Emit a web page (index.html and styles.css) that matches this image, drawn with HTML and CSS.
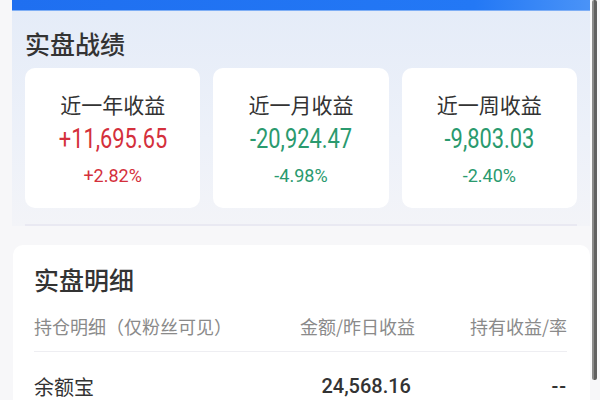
FILE: index.html
```html
<!DOCTYPE html>
<html lang="zh">
<head>
<meta charset="utf-8">
<link rel="stylesheet" href="styles.css">
</head>
<body>
<div class="page">
  <div class="main">
    <div class="hero"></div>
    <section class="perf">
      <h2 class="title">实盘战绩</h2>
      <div class="cards">
        <div class="card">
          <div class="label">近一年收益</div>
          <div class="value up"><span>+11,695.65</span></div>
          <div class="pct up">+2.82%</div>
        </div>
        <div class="card">
          <div class="label">近一月收益</div>
          <div class="value down"><span>-20,924.47</span></div>
          <div class="pct down">-4.98%</div>
        </div>
        <div class="card">
          <div class="label">近一周收益</div>
          <div class="value down"><span>-9,803.03</span></div>
          <div class="pct down">-2.40%</div>
        </div>
      </div>
      <div class="sep"></div>
    </section>
    <section class="detail">
      <h2 class="title2">实盘明细</h2>
      <div class="row head">
        <span class="c1">持仓明细（仅粉丝可见）</span>
        <span class="c2">金额/昨日收益</span>
        <span class="c3">持有收益/率</span>
      </div>
      <div class="row item">
        <span class="c1">余额宝</span>
        <span class="c2 num">24,568.16</span>
        <span class="c3 num dash">--</span>
      </div>
    </section>
  </div>
  <div class="rail"><div class="thumb"></div></div>
</div>
</body>
</html>
```
FILE: styles.css
```css
* { box-sizing: border-box; margin: 0; padding: 0; }
html, body { width: 600px; height: 400px; overflow: hidden; }
body {
  background: #f7f7f9;
  font-family: "Noto Sans CJK SC", "Noto Sans", sans-serif;
  color: #333;
}
.page {
  display: flex;
  width: 600px;
  height: 400px;
  padding-left: 12px;
}
.main {
  width: 578px;
  flex-shrink: 0;
  display: flex;
  flex-direction: column;
}
.main > * { flex-shrink: 0; }
.hero {
  height: 11px;
  background: linear-gradient(90deg, #1f6ff0 0%, #2378f5 80%, #4a93f7 100%);
  border-bottom: 1px solid #7eaef5;
}
.perf {
  background: linear-gradient(180deg, #e5ecf8 0%, #edf1f9 60%, #f3f4f8 100%);
  padding: 15px 13px 0 13px;
}
.title {
  font-size: 25px;
  font-weight: 500;
  line-height: 34px;
  color: #333;
  margin-bottom: 8px;
}
.cards {
  display: flex;
  gap: 13px;
}
.card {
  flex: 1;
  height: 140px;
  background: #fff;
  border-radius: 10px;
  display: flex;
  flex-direction: column;
  align-items: center;
  padding-top: 22px;
}
.label {
  font-size: 21px;
  line-height: 28px;
  color: #333;
}
.value {
  font-family: "Roboto", sans-serif;
  font-size: 27px;
  line-height: 32px;
  margin-top: 5px;
}
.value span {
  display: inline-block;
  transform: scaleX(0.81);
}
.pct {
  font-family: "Roboto", sans-serif;
  font-size: 18px;
  line-height: 24px;
  margin-top: 9px;
}
.up { color: #d4303c; }
.down { color: #2a9a6e; }
.sep {
  height: 2px;
  background: #e9e9f2;
  margin-top: 16px;
}
.detail {
  margin-top: 19px;
  margin-left: 1px;
  background: #fff;
  border-radius: 10px 10px 0 0;
  padding: 17px 23px 0 21px;
  flex-grow: 1;
}
.title2 {
  font-size: 25px;
  font-weight: 500;
  line-height: 34px;
  color: #333;
}
.row {
  display: flex;
  align-items: center;
}
.row .c1 { flex: 1; }
.row .c2 { width: 150px; text-align: right; }
.row .c3 { width: 152px; text-align: right; }
.head {
  margin-top: 8px;
  height: 48px;
  font-size: 18px;
  color: #8a8a8a;
  border-bottom: 1px solid #eeeef2;
  padding-bottom: 4px;
}
.item {
  height: 50px;
  font-size: 20px;
  color: #333;
  padding-top: 18px;
}
.num {
  font-family: "Roboto", sans-serif;
  font-weight: 500;
  font-size: 20px;
}
.item .c2 { padding-right: 4px; }
.dash { letter-spacing: 1px; }
.rail {
  flex: 1;
  display: flex;
  padding-left: 2px;
  padding-right: 3px;
}
.thumb {
  flex: 1;
  height: 380px;
  border-left: 2px solid #8a8a8a;
  border-right: 3px solid #5f5f5f;
  border-radius: 2px;
}
```
